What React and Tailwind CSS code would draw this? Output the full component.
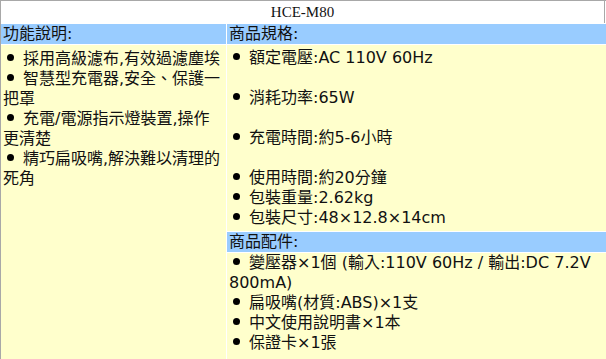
import React from 'react'

const font = { fontFamily: '"DejaVu Sans", "Noto Sans CJK TC", sans-serif' }

function Dot() {
    return <span className="inline-block w-[7px] h-[7px] rounded-full bg-black ml-[4px] mr-[9px] align-middle relative -top-[2px]"></span>
}

function Item({ children }) {
    return (
        <div>
            <Dot />
            {children}
        </div>
    )
}

function Header({ children }) {
    return <div className="bg-[#99ccff] h-[20px] leading-5 px-[2px] text-[16px]">{children}</div>
}

export default function App() {
    return (
        <div className="w-[606px] h-[359px] overflow-hidden bg-white border-t border-l border-[#a8a8a8] text-[#111]">
            <div className="h-[22px] flex items-center justify-center text-[15px] border-r border-[#a8a8a8] mr-[1px]" style={{ fontFamily: '"Liberation Serif", serif' }}>
                HCE-M80
            </div>
            <div className="flex gap-px mt-px h-[340px] text-[16px] leading-5" style={font}>
                <div className="w-[225px] flex flex-col gap-px">
                    <Header>功能說明:</Header>
                    <div className="flex-1 bg-[#ffffcc] px-[2px] pt-[4px]">
                        <Item>採用高級濾布,有效過濾塵埃</Item>
                        <Item>智慧型充電器,安全、保護一<br />把罩</Item>
                        <Item>充電/電源指示燈裝置,操作<br />更清楚</Item>
                        <Item>精巧扁吸嘴,解決難以清理的<br />死角</Item>
                    </div>
                </div>
                <div className="flex-1 flex flex-col gap-px">
                    <Header>商品規格:</Header>
                    <div className="h-[186px] bg-[#ffffcc] px-[2px] pt-[3px]">
                        <Item>額定電壓:AC 110V 60Hz</Item>
                        <div className="h-5"></div>
                        <Item>消耗功率:65W</Item>
                        <div className="h-5"></div>
                        <Item>充電時間:約5-6小時</Item>
                        <div className="h-5"></div>
                        <Item>使用時間:約20分鐘</Item>
                        <Item>包裝重量:2.62kg</Item>
                        <Item>包裝尺寸:48×12.8×14cm</Item>
                    </div>
                    <Header>商品配件:</Header>
                    <div className="flex-1 bg-[#ffffcc] px-[2px]">
                        <Item>變壓器×1個 (輸入:110V 60Hz / 輸出:DC 7.2V<br />800mA)</Item>
                        <Item>扁吸嘴(材質:ABS)×1支</Item>
                        <Item>中文使用說明書×1本</Item>
                        <Item>保證卡×1張</Item>
                    </div>
                </div>
            </div>
        </div>
    )
}
